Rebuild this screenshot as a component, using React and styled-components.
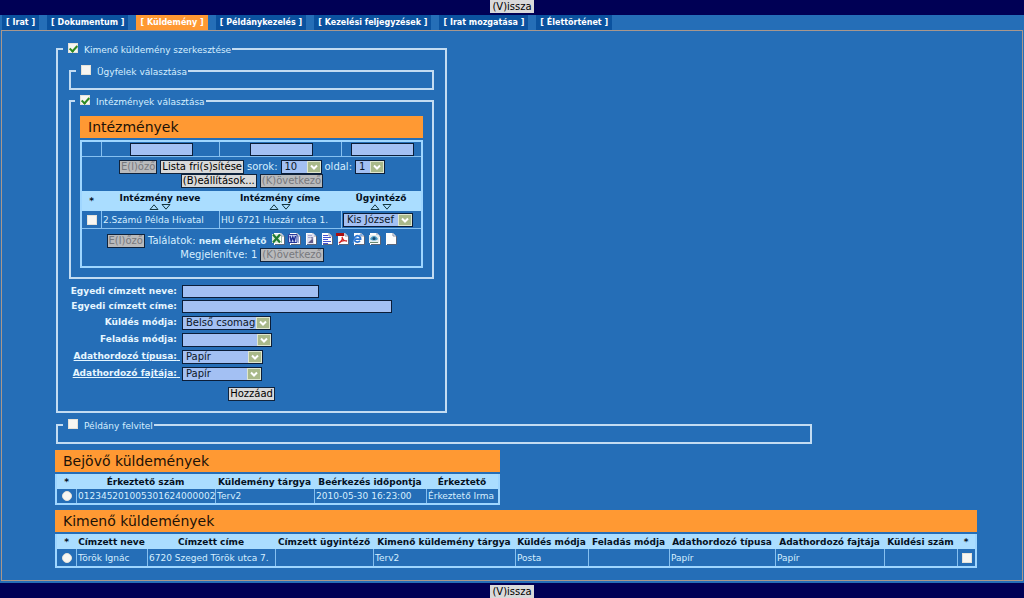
import styled, { createGlobalStyle } from "styled-components";

//!styles----------------------------------------------
const GlobalStyle = createGlobalStyle`
    * {
        box-sizing: border-box;
    }
    body {
        margin: 0;
        background-color: #256eb7;
        color: #d6efff;
        font-family: Verdana, "DejaVu Sans", sans-serif;
        font-size: 9px;
        line-height: 14px;
    }
    button, input, select {
        font: inherit;
        margin: 0;
    }
`;

const Page = styled.div`
    display: flex;
    flex-direction: column;
    min-height: 100vh;
`;

const Bar = styled.div`
    display: flex;
    justify-content: center;
    align-items: ${({ $end }) => ($end ? "flex-end" : "flex-start")};
    height: 15px;
    background-color: #000055;
`;

const Button = styled.button`
    height: 14px;
    padding: 0 1px;
    border: 1px solid #10233c;
    background-color: #d9d9d9;
    color: #000;
    font-size: 10px;
    line-height: 12px;
    white-space: nowrap;

    &:disabled {
        background-color: #b9babc;
        color: #77787c;
    }
`;

const BackButton = styled(Button)`
    height: 13px;
    border-color: #d9d9d9;
`;

const Tabs = styled.nav`
    display: flex;
    gap: 8px;
    height: 15px;
    padding: 0 2px;
`;

const Tab = styled.a`
    padding: 1px 4px 0;
    background-color: ${({ $active }) => ($active ? "#ff9933" : "#0b529f")};
    color: #fff;
    font-size: 8px;
    font-weight: bold;
    text-decoration: none;
    white-space: nowrap;
`;

const Main = styled.main`
    flex: 1;
    margin: 0 1px 2px;
    padding: 11px 40px 0 53px;
    border: 1px solid #a9978c;
`;

const Fieldset = styled.fieldset`
    width: ${({ $width }) => $width || "auto"};
    min-width: 0;
    margin: ${({ $margin }) => $margin || "0"};
    padding: ${({ $padding }) => $padding || "0 10px 10px"};
    border: 2px solid #c3dcf2;
`;

const Legend = styled.legend`
    height: 14px;
    margin-left: ${({ $outer }) => ($outer ? "-6px" : "-5px")};
    padding: 0 1px 0 5px;
`;

const LegendLabel = styled.label`
    display: flex;
    align-items: flex-start;
    gap: 6px;
    font-size: 9px;
    line-height: 16px;
    white-space: nowrap;
`;

const Check = styled.input`
    appearance: none;
    position: relative;
    flex: none;
    display: block;
    width: 10px;
    height: 10px;
    margin: ${({ $center }) => ($center ? "0 auto" : "1px 0 0")};
    border: 1px solid #e6e2d8;
    border-radius: ${({ type }) => (type === "radio" ? "50%" : "0")};
    background-color: #f7f6f2;

    &:checked::after {
        content: "";
        position: absolute;
        left: 2px;
        top: 0;
        width: 3px;
        height: 6px;
        border: solid #2d8a22;
        border-width: 0 2px 2px 0;
        transform: rotate(42deg);
    }
`;

const TableTitle = styled.h2`
    width: ${({ $width }) => $width};
    height: 22px;
    margin: 0 0 2px;
    padding-left: 8px;
    background-color: #ff9933;
    color: #1c1208;
    font-size: 14px;
    font-weight: normal;
    line-height: 22px;
`;

const Table = styled.table`
    width: ${({ $width }) => $width};
    margin-bottom: ${({ $gap }) => $gap || "0"};
    table-layout: fixed;
    border-collapse: separate;
    border-spacing: 0;
    border: solid #9fd6ff;
    border-width: ${({ $framed }) => ($framed ? "2px" : "0 2px 2px")};
`;

const Th = styled.th`
    height: ${({ $tall }) => ($tall ? "20px" : "15px")};
    padding: 0;
    background-color: #aaddff;
    color: #04111f;
    font-size: 9px;
    font-weight: bold;
    line-height: 12px;
    white-space: nowrap;
`;

const Td = styled.td`
    height: ${({ $height }) => $height || "14px"};
    padding: 0 0 0 1px;
    border-left: 1px solid #86c0f0;
    border-bottom: ${({ $line }) => ($line ? "1px solid #86c0f0" : "0")};
    font-size: 9px;
    line-height: 12px;
    text-align: ${({ $center }) => ($center ? "center" : "left")};
    white-space: nowrap;

    &:first-child {
        border-left: 0;
    }
`;

const PagerLine = styled.div`
    display: flex;
    justify-content: center;
    align-items: center;
    gap: 3px;
    height: 14px;
    font-size: 10px;

    b {
        font-size: 9px;
    }
`;

const Input = styled.input`
    width: ${({ $width }) => $width};
    height: 13px;
    padding: 0 2px;
    border: 1px solid #0b1d38;
    border-radius: 0;
    background-color: #a3c0f3;
    vertical-align: middle;
`;

const SelectBox = styled.span`
    position: relative;
    display: inline-flex;
    width: ${({ $width }) => $width};
    height: 14px;
    vertical-align: middle;

    svg {
        position: absolute;
        top: 1px;
        right: 1px;
        pointer-events: none;
    }
`;

const SelectField = styled.select`
    appearance: none;
    width: 100%;
    padding: 0 15px 0 3px;
    border: 1px solid #0b1d38;
    border-radius: 0;
    background-color: #a3c0f3;
    color: #0b1626;
    font-size: 10px;
    line-height: 12px;
`;

const SortIcons = styled.svg`
    display: block;
    margin: 0 auto;
`;

const FileIcons = styled.span`
    display: flex;
    align-self: flex-start;
    gap: 3px;
    margin: -2px 0 0 3px;
`;

const Form = styled.form`
    display: grid;
    grid-template-columns: 113px 1fr;
    align-items: center;
    column-gap: 2px;
    margin: 5px 0 5px -2px;
`;

const FormLabel = styled.label`
    color: #e6f6ff;
    font-size: 9px;
    font-weight: bold;
    line-height: 15px;
    text-align: right;
    text-decoration: ${({ $underline }) => ($underline ? "underline" : "none")};
    white-space: nowrap;
`;

const FormCell = styled.div`
    display: flex;
    align-items: center;
    height: ${({ $select }) => ($select ? "17px" : "15px")};
`;

const Center = styled.div`
    display: flex;
    justify-content: center;
`;

//!data------------------------------------------------
const TABS = [
    "Irat",
    "Dokumentum",
    "Küldemény",
    "Példánykezelés",
    "Kezelési feljegyzések",
    "Irat mozgatása",
    "Élettörténet",
];

const FIELDS = [
    { id: "nev", label: "Egyedi címzett neve:", input: "137px" },
    { id: "cim", label: "Egyedi címzett címe:", input: "210px" },
    { id: "kuldes", label: "Küldés módja:", select: "89px", value: "Belső csomag" },
    { id: "feladas", label: "Feladás módja:", select: "90px", value: "" },
    { id: "tipus", label: "Adathordozó típusa:", select: "81px", value: "Papír", underline: true },
    { id: "fajta", label: "Adathordozó fajtája:", select: "80px", value: "Papír", underline: true },
];

const INCOMING = {
    cols: [19, 139, 99, 112, 72],
    head: ["*", "Érkeztető szám", "Küldemény tárgya", "Beérkezés időpontja", "Érkeztető"],
    row: ["012345201005301624000002", "Terv2", "2010-05-30 16:23:00", "Érkeztető Irma"],
};

const OUTGOING = {
    cols: [19, 71, 128, 98, 142, 73, 81, 106, 109, 73, 18],
    head: [
        "*",
        "Címzett neve",
        "Címzett címe",
        "Címzett ügyintéző",
        "Kimenő küldemény tárgya",
        "Küldés módja",
        "Feladás módja",
        "Adathordozó típusa",
        "Adathordozó fajtája",
        "Küldési szám",
        "*",
    ],
    row: ["Török Ignác", "6720 Szeged Török utca 7.", "", "Terv2", "Posta", "", "Papír", "Papír", ""],
};

//!components------------------------------------------
const Cols = ({ widths }) => (
    <colgroup>
        {widths.map((w, i) => (
            <col key={i} width={w} />
        ))}
    </colgroup>
);

const Select = ({ width, value, ...rest }) => (
    <SelectBox $width={width}>
        <SelectField defaultValue={value} {...rest}>
            <option>{value}</option>
        </SelectField>
        <svg width="14" height="12" viewBox="0 0 14 12">
            <rect width="14" height="12" fill="#dfe6cf" />
            <rect x="1" y="1" width="12" height="10" fill="#a9b98a" />
            <path d="M4 4.5 L7 7.5 L10 4.5" fill="none" stroke="#fff" strokeWidth="2" />
        </svg>
    </SelectBox>
);

const Sort = () => (
    <SortIcons width="22" height="6" viewBox="0 0 22 6">
        <path d="M1 5.5 L5 0.8 L9 5.5 Z" fill="none" stroke="#14363f" />
        <path d="M13 0.5 L17 5.2 L21 0.5 Z" fill="none" stroke="#14363f" />
    </SortIcons>
);

const Sheet = ({ children }) => (
    <svg width="13" height="13" viewBox="0 0 13 13">
        <path d="M2 1 H9 L12 4 V13 H2 Z" fill="#fdfdfd" />
        <path d="M9 1 V4 H12" fill="none" stroke="#8b93a8" />
        <path d="M12.5 4 V12.5 H3" fill="none" stroke="#5a6478" />
        {children}
    </svg>
);

const ExportIcons = () => (
    <FileIcons>
        <Sheet>
            <path d="M0 2 H8 V11 H0 Z" fill="#dcebdc" />
            <path d="M1 2.5 L8 10.5 M8 2.5 L1 10.5" stroke="#1f7a32" strokeWidth="2.2" />
            <path d="M9.5 4 V11" stroke="#9fbfa4" />
        </Sheet>
        <Sheet>
            <path d="M0.5 2.5 H9 V10.5 H0.5 Z" fill="#cdd6f3" stroke="#2b3c9c" />
            <path d="M2 4 L3.2 9 L4.8 5 L6.2 9 L7.5 4" fill="none" stroke="#1c2f96" strokeWidth="1.4" />
            <path d="M10.5 4 V11" stroke="#9aa5d6" />
        </Sheet>
        <Sheet>
            <path d="M3 2 H10 V12 H3 Z" fill="#dfe0f0" />
            <path d="M4 3.5 H8 M4 5.5 H6" stroke="#a9acd0" />
            <path d="M4 11 L9 6 V11 Z" fill="#5f5788" />
            <path d="M6 5 H9 V8 Z" fill="#8a86a8" />
        </Sheet>
        <Sheet>
            <path d="M3 3.5 H8 M3 5.5 H11 M3 7.5 H8 M3 9.5 H11 M3 11.5 H8" stroke="#4251d4" />
        </Sheet>
        <Sheet>
            <path d="M0 1 H8 V4 H0 Z" fill="#a81010" />
            <path d="M3 11 C6 9 7 7 6 5 C7 9 9 9 11 9 C8 8 5 9 3 11 Z" fill="none" stroke="#d21f1f" strokeWidth="1.3" />
        </Sheet>
        <Sheet>
            <path d="M8 8.8 A3.2 3.2 0 1 1 8.6 7.2 H3" fill="none" stroke="#2470cf" strokeWidth="1.8" />
            <path d="M1 11 C2 6 7 2 10.5 3" fill="none" stroke="#5a9be6" />
        </Sheet>
        <Sheet>
            <path d="M1 3 H11 V11 H1 Z" fill="#e5eef0" />
            <path d="M2 7 C4 3 8 3 10 7 C8 9 4 9 2 7 Z" fill="#4b9bc4" />
            <circle cx="6" cy="6.5" r="1.5" fill="#174a72" />
            <path d="M2 10.5 H10" stroke="#6a8a70" />
        </Sheet>
        <Sheet />
    </FileIcons>
);

const CheckLegend = ({ text, checked, outer }) => (
    <Legend $outer={outer}>
        <LegendLabel>
            <Check type="checkbox" defaultChecked={checked} />
            {text}
        </LegendLabel>
    </Legend>
);

const Institutions = () => (
    <>
        <TableTitle>Intézmények</TableTitle>
        <Table $width="100%" $framed>
            <Cols widths={[19, 118, 122, 80]} />
            <tbody>
                <tr>
                    <Td $height="15px" $line />
                    {["név", "cím", "ügyintéző"].map((name) => (
                        <Td key={name} $height="15px" $center $line>
                            <Input $width="63px" aria-label={name} />
                        </Td>
                    ))}
                </tr>
                <tr>
                    <Td colSpan={4} $height="34px">
                        <PagerLine>
                            <Button disabled>E(l)őző</Button>
                            <Button>Lista fri(s)sítése</Button>
                            <label htmlFor="sorok">sorok:</label>
                            <Select id="sorok" width="41px" value="10" />
                            <label htmlFor="oldal">oldal:</label>
                            <Select id="oldal" width="30px" value="1" />
                        </PagerLine>
                        <PagerLine>
                            <Button>(B)eállítások...</Button>
                            <Button disabled>(K)övetkező</Button>
                        </PagerLine>
                    </Td>
                </tr>
                <tr>
                    <Th $tall>*</Th>
                    {["Intézmény neve", "Intézmény címe", "Ügyintéző"].map((name) => (
                        <Th key={name} $tall>
                            {name}
                            <Sort />
                        </Th>
                    ))}
                </tr>
                <tr>
                    <Td $height="18px" $line>
                        <Check type="checkbox" aria-label="kijelölés" $center />
                    </Td>
                    <Td $line>2.Számú Példa Hivatal</Td>
                    <Td $line>HU 6721 Huszár utca 1.</Td>
                    <Td $line>
                        <Select width="70px" value="Kis József" aria-label="Ügyintéző" />
                    </Td>
                </tr>
                <tr>
                    <Td colSpan={4} $height="37px">
                        <PagerLine>
                            <Button disabled>E(l)őző</Button>
                            <span>
                                Találatok: <b>nem elérhető</b>
                            </span>
                            <ExportIcons />
                        </PagerLine>
                        <PagerLine>
                            <span>Megjelenítve: 1</span>
                            <Button disabled>(K)övetkező</Button>
                        </PagerLine>
                    </Td>
                </tr>
            </tbody>
        </Table>
    </>
);

const Shipments = ({ title, name, data, width, gap, height, last }) => (
    <>
        <TableTitle $width={width}>{title}</TableTitle>
        <Table $width={width} $gap={gap}>
            <Cols widths={data.cols} />
            <thead>
                <tr>
                    {data.head.map((text, i) => (
                        <Th key={i}>{text}</Th>
                    ))}
                </tr>
            </thead>
            <tbody>
                <tr>
                    <Td $height={height}>
                        <Check type="radio" name={name} aria-label={title} $center />
                    </Td>
                    {data.row.map((text, i) => (
                        <Td key={i}>{text}</Td>
                    ))}
                    {last && (
                        <Td>
                            <Check type="checkbox" aria-label="kijelölés" $center />
                        </Td>
                    )}
                </tr>
            </tbody>
        </Table>
    </>
);

const App = () => {
    return (
        <Page>
            <GlobalStyle />
            <Bar>
                <BackButton>(V)issza</BackButton>
            </Bar>
            <Tabs>
                {TABS.map((tab) => (
                    <Tab key={tab} href="#" $active={tab === "Küldemény"}>
                        [ {tab} ]
                    </Tab>
                ))}
            </Tabs>
            <Main>
                <Fieldset $width="391px" $margin="0 0 5px 1px" $padding="8px 11px 10px">
                    <CheckLegend text="Kimenő küldemény szerkesztése" checked outer />
                    <Fieldset $margin="0 0 4px">
                        <CheckLegend text="Ügyfelek választása" />
                    </Fieldset>
                    <Fieldset $padding="8px 9px 9px">
                        <CheckLegend text="Intézmények választása" checked />
                        <Institutions />
                    </Fieldset>
                    <Form>
                        {FIELDS.map((f) => [
                            <FormLabel key={f.id} htmlFor={f.id} $underline={f.underline}>
                                {f.label}&nbsp;
                            </FormLabel>,
                            <FormCell key={f.id + "-cell"} $select={!!f.select}>
                                {f.select ? (
                                    <Select id={f.id} width={f.select} value={f.value} />
                                ) : (
                                    <Input id={f.id} $width={f.input} />
                                )}
                            </FormCell>,
                        ])}
                    </Form>
                    <Center>
                        <Button>Hozzáad</Button>
                    </Center>
                </Fieldset>
                <Fieldset $width="756px" $margin="0 0 6px 1px" $padding="0 11px 10px">
                    <CheckLegend text="Példány felvitel" outer />
                </Fieldset>
                <Shipments
                    title="Bejövő küldemények"
                    name="bejovo"
                    data={INCOMING}
                    width="445px"
                    gap="5px"
                    height="14px"
                />
                <Shipments
                    title="Kimenő küldemények"
                    name="kimeno"
                    data={OUTGOING}
                    width="922px"
                    height="17px"
                    last
                />
            </Main>
            <Bar $end>
                <BackButton>(V)issza</BackButton>
            </Bar>
        </Page>
    );
};

export default App;
